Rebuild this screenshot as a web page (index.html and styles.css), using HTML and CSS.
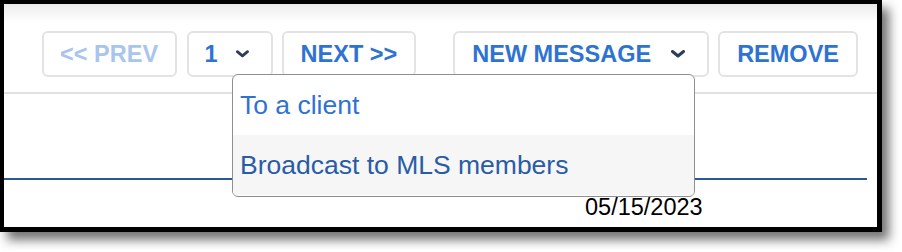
FILE: index.html
```
<!DOCTYPE html>
<html>
<head>
<meta charset="utf-8">
<link rel="stylesheet" href="styles.css">
</head>
<body>
<div class="frame">
  <div class="toolbar">
    <button class="btn btn-prev btn-disabled">&lt;&lt; PREV</button>
    <button class="btn btn-select btn-page">1 <svg class="chev" viewBox="0 0 14 8" width="14" height="8"><polyline points="1.5,1.5 7,6 12.5,1.5"/></svg></button>
    <button class="btn">NEXT &gt;&gt;</button>
    <button class="btn btn-select btn-new">NEW MESSAGE <svg class="chev" viewBox="0 0 14 8" width="14" height="8"><polyline points="1.5,1.5 7,6 12.5,1.5"/></svg></button>
    <button class="btn">REMOVE</button>
    <div class="menu">
      <div class="menu-item">To a client</div>
      <div class="menu-item menu-item-hover">Broadcast to MLS members</div>
    </div>
  </div>
  <div class="content">
    <div class="rule"></div>
    <div class="date">05/15/2023</div>
  </div>
</div>
</body>
</html>
```

FILE: styles.css
```
html, body {
  margin: 0;
  padding: 0;
  background: #ffffff;
}

body {
  font-family: "Liberation Sans", Arial, Helvetica, sans-serif;
  width: 902px;
  height: 252px;
  overflow: hidden;
}

.frame {
  box-sizing: border-box;
  width: 882px;
  height: 232px;
  border: 4px solid #000;
  border-right-width: 5px;
  border-bottom-width: 5px;
  background: linear-gradient(#ebebeb 0px, #ffffff 18px);
  box-shadow: 7px 8px 10px rgba(0, 0, 0, 0.55);
  overflow: hidden;
}

.toolbar {
  position: relative;
  display: flex;
  justify-content: flex-end;
  align-items: center;
  gap: 9px;
  padding: 27px 19px 15px 0;
  border-bottom: 2px solid #e2e2e2;
}

.btn {
  box-sizing: border-box;
  height: 46px;
  display: flex;
  align-items: center;
  padding: 0 17px;
  border: 2px solid #e3e3e3;
  border-radius: 6px;
  background: #ffffff;
  font-family: "Liberation Sans", Arial, Helvetica, sans-serif;
  font-weight: bold;
  font-size: 23.5px;
  color: #2f73d2;
  white-space: nowrap;
  margin: 0;
}

.btn-disabled {
  color: #a9c5ee;
}

.btn-prev {
  width: 135px;
  padding: 0;
  justify-content: center;
}

.btn-select {
  gap: 20px;
  padding-right: 22px;
}

.btn-page {
  width: 86px;
  gap: 18px;
  padding-left: 16px;
  margin-left: 1px;
}

.btn-new {
  margin-left: 28px;
}

.chev {
  fill: none;
  stroke: #2c3d59;
  stroke-width: 3;
  stroke-linecap: round;
  stroke-linejoin: round;
}

.menu {
  position: absolute;
  left: 228px;
  top: 70px;
  box-sizing: border-box;
  width: 463px;
  height: 123px;
  border: 1.5px solid #8f8f8f;
  border-radius: 6px;
  background: #ffffff;
  overflow: hidden;
  z-index: 2;
}

.menu-item {
  height: 60px;
  line-height: 60px;
  padding-left: 7px;
  font-size: 26.5px;
  color: #2f72d0;
  white-space: nowrap;
}

.menu-item-hover {
  background: #f6f6f6;
  color: #2a5ca6;
}

.content {
  padding: 84px 10px 0 0;
}

.rule {
  height: 2px;
  background: #2b5a92;
}

.date {
  padding: 14px 0 0 581px;
  font-size: 23.5px;
  line-height: 27px;
  color: #000;
}
```
